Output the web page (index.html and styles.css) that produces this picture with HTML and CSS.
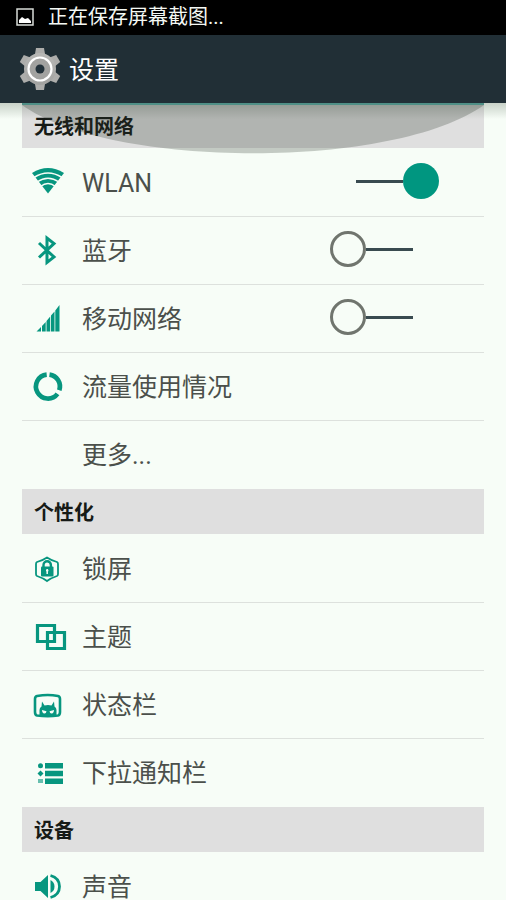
FILE: index.html
```html
<!DOCTYPE html>
<html lang="zh-CN">
<head>
<meta charset="utf-8">
<meta name="viewport" content="width=device-width, initial-scale=1">
<title>设置</title>
<link rel="stylesheet" href="styles.css">
</head>
<body>
<div class="status-bar">
  <svg class="status-icon" viewBox="0 0 18 18" aria-hidden="true"><rect x="1" y="1" width="16" height="16" fill="none" stroke="#d8dcd8" stroke-width="1.5"/><path d="M3 15v-3l3-3 3 2 3-1 3 3v2z" fill="#fff"/></svg>
  <span>正在保存屏幕截图...</span>
</div>
<header class="app-bar">
  <svg class="gear" viewBox="0 0 42 44" aria-hidden="true">
    <defs><linearGradient id="metal" x1="0" y1="0" x2="0" y2="1"><stop offset="0" stop-color="#b8b8b6"/><stop offset="1" stop-color="#a2a2a0"/></linearGradient></defs>
    <g fill="#adadab">
      <path id="teeth" d="M17 1h8l1.500 9v24L25 43h-8l-1.500-9V10z"/>
      <use href="#teeth" transform="rotate(60 21 22)"/>
      <use href="#teeth" transform="rotate(120 21 22)"/>
    </g>
    <circle cx="21" cy="22" r="16" fill="url(#metal)"/>
    <circle cx="21" cy="22" r="11.5" fill="#a2a2a0" stroke="#fff" stroke-width="2.200"/>
    <circle cx="21" cy="22" r="4.500" fill="#22313a"/>
  </svg>
  <h1>设置</h1>
</header>
<main class="content">
  <svg class="edge-glow" viewBox="0 0 462 51" preserveAspectRatio="none" aria-hidden="true"><path d="M0 0C90 67 372 67 462 0z"/></svg>
  <section>
    <h2>无线和网络</h2>
    <ul>
      <li>
        <svg class="icon" viewBox="0 0 34 34" aria-hidden="true"><path d="M1 8Q17-2 33 8L17 28.500z"/><path class="cut" d="M3 12.500Q17 3.500 31 12.500M6 17Q17 9.500 28 17M9.500 21.500Q17 15.500 24.500 21.500"/></svg>
        <label for="wlan">WLAN</label>
        <input class="switch" type="checkbox" id="wlan" checked>
      </li>
      <li>
        <svg class="icon line" viewBox="0 0 34 34" aria-hidden="true"><path d="M8 10l15 14-7 5.500V5l7 5.500L8 24.500" stroke-width="3"/></svg>
        <label for="bluetooth">蓝牙</label>
        <input class="switch" type="checkbox" id="bluetooth">
      </li>
      <li>
        <svg class="icon" viewBox="0 0 34 34" aria-hidden="true"><path d="M5.500 30.500L10 26v4.500zM11 25l3.700-4v9.500H11zM15.500 20l3.700-4.500v15h-3.700zM20 14.500l3.500-4v20H20zM24.300 9.500L28.500 4v26.500h-4.200z"/></svg>
        <label for="mobile">移动网络</label>
        <input class="switch" type="checkbox" id="mobile">
      </li>
      <li>
        <svg class="icon line" viewBox="0 0 34 34" aria-hidden="true"><path d="M18.500 5.600A12 12 0 0 1 28.300 21.200M26.500 24.800A12 12 0 1 1 15.700 5.600" stroke-width="4.700"/></svg>
        <a href="#data">流量使用情况</a>
      </li>
      <li>
        <span class="icon"></span>
        <a href="#more">更多...</a>
      </li>
    </ul>
  </section>
  <section>
    <h2>个性化</h2>
    <ul>
      <li>
        <svg class="icon" viewBox="0 0 34 34" aria-hidden="true"><path d="M16 6.500Q20 9.300 26 11 27 11.500 27 13V23Q27 24.500 26 25 20 27 16 30 12 27 6 25 5 24.500 5 23V13Q5 11.500 6 11 12 9.300 16 6.500z" fill="none" stroke="#07967f" stroke-width="1.800"/><path d="M12.500 17v-3a3.700 3.700 0 0 1 7.400 0v3" fill="none" stroke="#07967f" stroke-width="2.400"/><rect x="10" y="15.500" width="12.500" height="10" rx="1"/><path class="cut" d="M16.200 18v5M15 19.500h2.400" stroke-width="1.500"/></svg>
        <a href="#lock">锁屏</a>
      </li>
      <li>
        <svg class="icon line" viewBox="0 0 34 34" aria-hidden="true"><path d="M6.500 6.500h17v16h-17zM16.500 13.500h17v16h-17z" stroke-width="3.200"/></svg>
        <a href="#theme">主题</a>
      </li>
      <li>
        <svg class="icon" viewBox="0 0 34 34" aria-hidden="true"><path d="M6 9Q17 7 27 9 29 9.500 29 12V25Q29 28 27 28.500 17 30 6 28.500 4 28 4 25V12Q4 9.500 6 9z" fill="none" stroke="#07967f" stroke-width="2.600"/><path d="M8.500 28.500V23q0-2.500 2-3.500L11 14.500l2.500 4q3.500-.8 7 0l2.500-4 .5 5q2 1 2 3.500v5.500z"/><path d="M11 23l4.500 1.200q-.3 2.500-2.300 2.300-2-.3-2.200-3.500zM23 23l-4.500 1.200q.3 2.500 2.300 2.300 2-.3 2.200-3.500z" fill="#f7fdf7"/></svg>
        <a href="#status">状态栏</a>
      </li>
      <li>
        <svg class="icon" viewBox="0 0 34 34" aria-hidden="true"><path d="M14 8h18v5.500H14zM14 15.800h18v5.500H14zM14 23.500h18V29H14z"/><circle cx="9.500" cy="10.700" r="2.500"/><path d="M9.500 15.500l3 3-3 3-3-3z"/><path d="M7 24h5v4H7z" opacity=".6"/></svg>
        <a href="#shade">下拉通知栏</a>
      </li>
    </ul>
  </section>
  <section>
    <h2>设备</h2>
    <ul>
      <li>
        <svg class="icon" viewBox="0 0 34 34" aria-hidden="true"><path d="M4 13h5.500L17 6v23l-7.500-7H4zM19.500 11q4 2 4 6.500t-4 6.500z"/><path d="M19.500 6.500q9 2.500 9 11t-9 11" fill="none" stroke="#07967f" stroke-width="2.800"/></svg>
        <a href="#sound">声音</a>
      </li>
    </ul>
  </section>
</main>
</body>
</html>
```
FILE: styles.css
```css
* {
  box-sizing: border-box;
}

body {
  margin: 0;
  height: 100vh;
  display: flex;
  flex-direction: column;
  background: #f7fdf7;
  color: #4b504b;
  font-family: Roboto, "Noto Sans CJK SC", sans-serif;
}

h1, h2, ul {
  margin: 0;
  padding: 0;
}

.status-bar {
  display: flex;
  flex: none;
  align-items: center;
  gap: 14px;
  height: 35px;
  padding: 0 16px 2px;
  background: #000;
  color: #f4f8f4;
  font-size: 20px;
  line-height: 32px;
}

.status-icon {
  width: 18px;
  height: 18px;
}

.app-bar {
  display: flex;
  flex: none;
  align-items: center;
  gap: 8px;
  height: 68px;
  padding: 0 19px;
  background: #212f36;
  color: #fff;
}

.gear {
  width: 42px;
  height: 44px;
}

h1 {
  padding-top: 4px;
  font-size: 25px;
  font-weight: 400;
  line-height: 36px;
}

.content {
  position: relative;
  flex: 1;
  min-height: 0;
  padding: 0 22px;
  overflow-y: auto;
  scrollbar-width: none;
}

.content::before {
  content: "";
  position: absolute;
  inset: 0 0 auto;
  height: 16px;
  background: linear-gradient(rgba(60, 80, 60, 0.25), rgba(60, 80, 60, 0));
}

.edge-glow {
  position: absolute;
  top: 0;
  left: 22px;
  width: calc(100% - 44px);
  height: 51px;
  border-top: 2px solid #4f8f86;
  fill: rgba(40, 50, 40, 0.25);
}

h2 {
  height: 45px;
  padding: 4px 0 0 12px;
  background: #dfdfdf;
  color: #161a16;
  font-size: 20px;
  font-weight: 700;
  line-height: 41px;
}

ul {
  padding-bottom: 1px;
  list-style: none;
}

li {
  display: flex;
  align-items: center;
  gap: 17px;
  height: 68px;
  padding: 0 45px 0 9px;
}

li + li {
  box-shadow: inset 0 1px #dde1dd;
}

li a, li label {
  flex: 1;
  padding-top: 4px;
  color: inherit;
  font-size: 25px;
  line-height: 36px;
  text-decoration: none;
}

.icon {
  flex: none;
  width: 34px;
  height: 34px;
  overflow: visible;
  fill: #07967f;
}

.line {
  fill: none;
  stroke: #07967f;
}

.cut {
  fill: none;
  stroke: #f7fdf7;
  stroke-width: 1.5px;
}

.switch {
  appearance: none;
  display: flex;
  align-items: center;
  width: 109px;
  height: 36px;
  margin: 0 0 2px;
}

.switch::before {
  content: "";
  box-sizing: border-box;
  width: 36px;
  height: 36px;
  border: 3px solid #70756e;
  border-radius: 50%;
}

.switch::after {
  content: "";
  width: 47px;
  height: 3px;
  background: #394b50;
}

.switch:checked {
  flex-direction: row-reverse;
}

.switch:checked::before {
  border: 0;
  background: #009680;
}
```
